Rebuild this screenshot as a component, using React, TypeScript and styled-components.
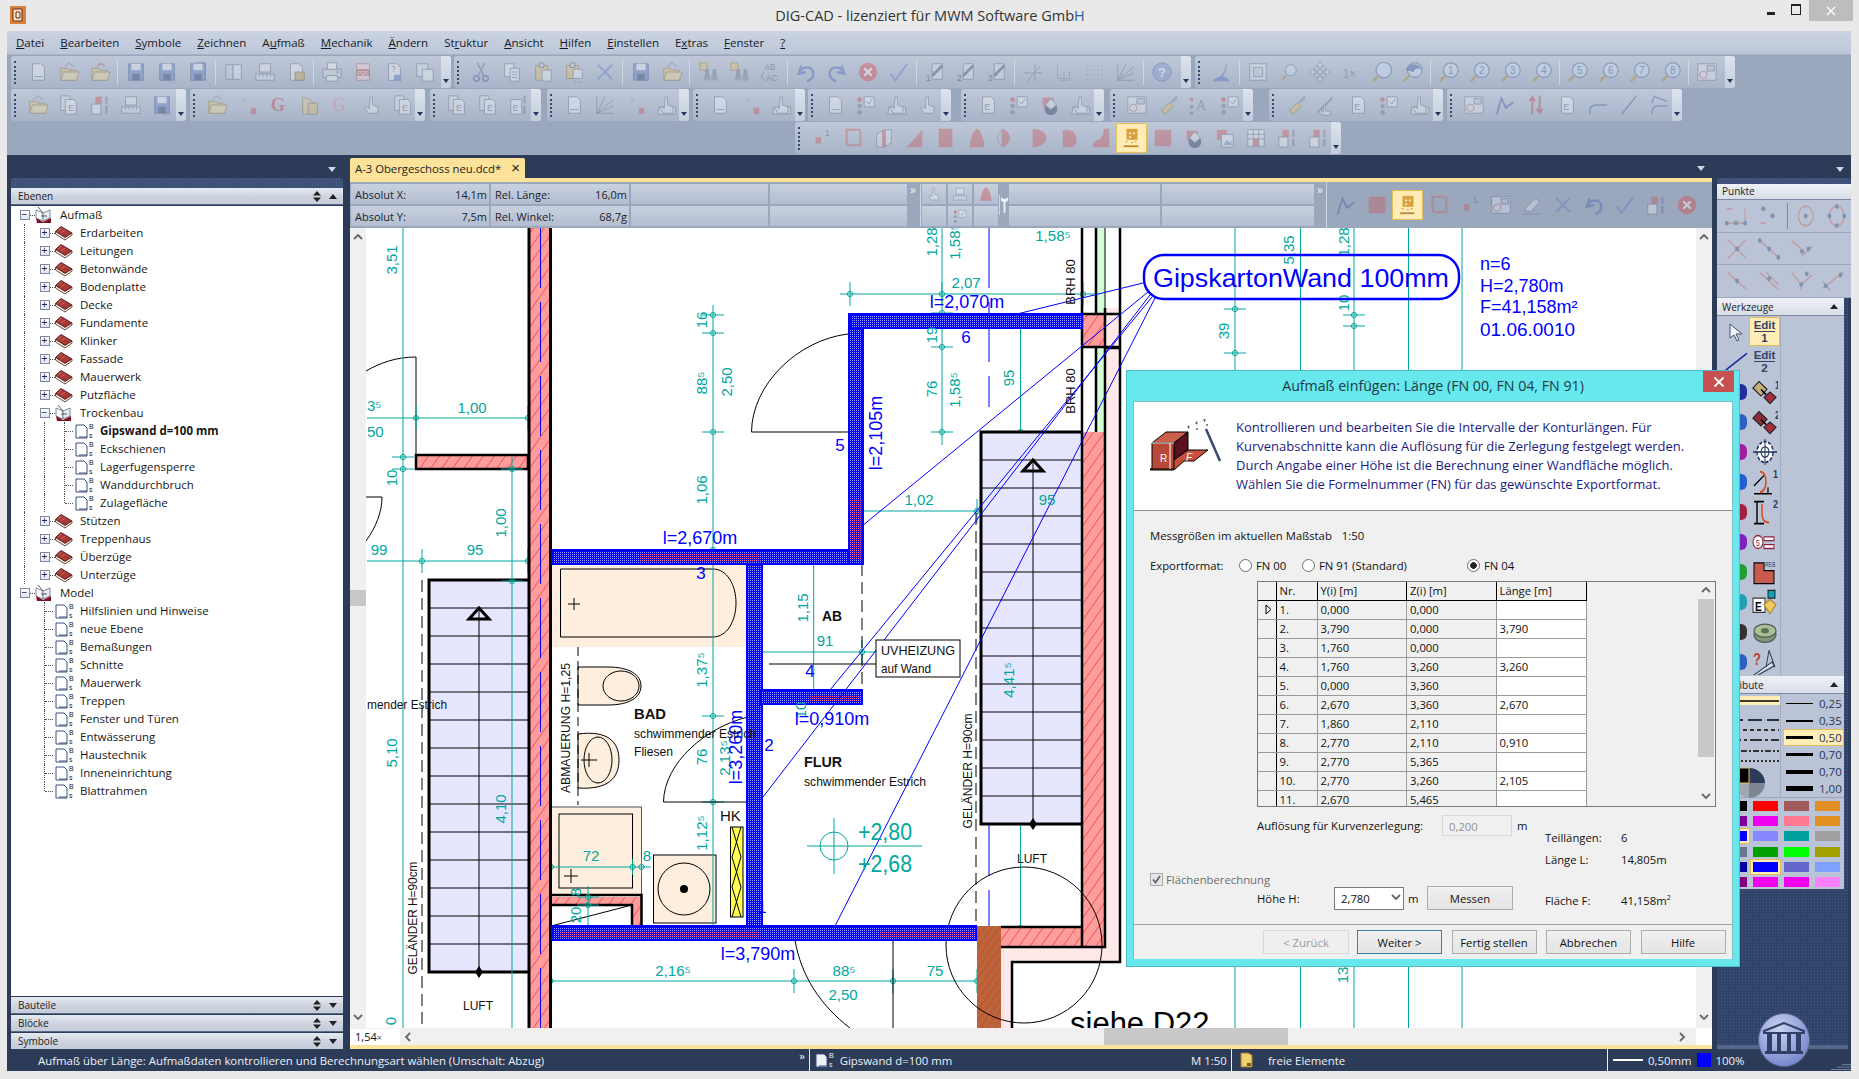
import React, { FC, ReactNode } from "react";
import styled, { createGlobalStyle } from "styled-components";

const UI_FONT = `"Open Sans", "Noto Sans", sans-serif`;
const DARK = "#2b3b58";
const TOOLBAR_BG = "#9aa7bd";
const YELLOW = "#fde29a";
const TEAL = "#00a79d";
const BLUE = "#0000ff";
const DOTS = `radial-gradient(#45598a 1px, transparent 1px) 0 0 / 3px 3px, #2f4468`;

const GlobalStyle = createGlobalStyle`
  html, body { margin: 0; padding: 0; background: #e9e9e9; }
  * { box-sizing: border-box; }
`;

/* ---------- toolbar icons ---------- */

const page = <path d="M6 3h9l4 4v14H6z" fill="#f4f6fa" stroke="#5f6c88" />;
const floppy = (
  <>
    <path d="M4 3h16v18H4z" fill="#5a79c4" stroke="#3d4f80" />
    <path d="M7 3h10v7H7z" fill="#e8ecf4" />
    <path d="M8 14h8v7H8z" fill="#27375f" />
  </>
);
const folder = (
  <>
    <path d="M3 8h7l2 2h8v11H3z" fill="#e6c468" stroke="#8a7335" />
    <path d="M6 12h17l-3 9H3z" fill="#f3dc94" stroke="#8a7335" />
  </>
);
const hand = (
  <path d="M10 3h2.5v9l6 2v7H8l-4-6 2-1 3 2z" fill="#eef1f6" stroke="#5f6c88" />
);
const redBlob = (d: string) => <path d={d} fill="#c9585c" />;
const zoomNo = (n: number) => (
  <>
    <circle cx="14" cy="10" r="8" fill="#cfe0f5" stroke="#4f6a9a" strokeWidth="1.4" />
    <text x="14" y="14" textAnchor="middle" fontSize="11" fontFamily="Liberation Sans" fill="#3a5a90">
      {n}
    </text>
    <path d="M8 16L2 22" stroke="#b08a3c" strokeWidth="3" />
  </>
);
const step = (n: number) => (
  <>
    <path d="M9 3h11v17H9z" fill="#dfe4ee" stroke="#5f6c88" />
    <path d="M9 16L20 5" stroke="#4a5570" strokeWidth="3" />
    <text x="2" y="22" fontSize="10" fontFamily="Liberation Sans" fill="#33415f">
      {n}
    </text>
  </>
);

const GLYPHS: Record<string, ReactNode> = {
  page: (
    <>
      {page}
      <path d="M8 17h9" stroke="#5f6c88" />
    </>
  ),
  pageE: (
    <>
      {page}
      <text x="8" y="17" fontSize="10" fontFamily="Liberation Sans" fill="#5f6c88">E</text>
    </>
  ),
  pagesE: (
    <>
      <path d="M3 2h10v16H3z" fill="#dfe4ee" stroke="#5f6c88" />
      <path d="M8 6h9l3 3v13H8z" fill="#f4f6fa" stroke="#5f6c88" />
      <text x="11" y="19" fontSize="10" fontFamily="Liberation Sans" fill="#5f6c88">E</text>
    </>
  ),
  pageTool: (
    <>
      <path d="M3 6h12v16H3z" fill="#f4f6fa" stroke="#5f6c88" />
      <path d="M18 2v8M18 13v9" stroke="#5f6c88" strokeWidth="2" />
      <text x="5" y="19" fontSize="10" fontFamily="Liberation Sans" fill="#5f6c88">E</text>
    </>
  ),
  open: folder,
  openUp: (
    <>
      {folder}
      <path d="M7 6l5-4 5 4" stroke="#5f6c88" fill="none" />
    </>
  ),
  openBack: (
    <>
      {folder}
      <path d="M9 6c2-4 6-4 8 0" stroke="#c05040" fill="none" strokeWidth="1.5" />
    </>
  ),
  save: floppy,
  saveDots: (
    <>
      {floppy}
      <path d="M14 23h1M17 23h1M20 23h1" stroke="#444" />
    </>
  ),
  saveStack: (
    <>
      <path d="M9 2h11v15H9z" fill="#8096cc" stroke="#3d4f80" />
      {floppy}
    </>
  ),
  book: (
    <>
      <path d="M3 4h8v16H3z" fill="#c8d4e4" stroke="#5f6c88" />
      <path d="M11 4h9v16h-9z" fill="#e7ebf2" stroke="#5f6c88" />
    </>
  ),
  ruler: (
    <>
      <path d="M6 3h12v9H6z" fill="#e7ebf2" stroke="#5f6c88" />
      <path d="M2 14h20v7H2zM6 14v3M10 14v3M14 14v3M18 14v3" fill="#dfe4ee" stroke="#5f6c88" />
    </>
  ),
  pageImg: (
    <>
      {page}
      <path d="M11 12h10v9H11z" fill="#c8a850" stroke="#6d5a2a" />
    </>
  ),
  printer: (
    <>
      <path d="M7 2h10v8H7z" fill="#fff" stroke="#5f6c88" />
      <path d="M2 9h20v9H2z" fill="#d4dae4" stroke="#5f6c88" />
      <path d="M6 16h12v6H6z" fill="#fff" stroke="#5f6c88" />
      <circle cx="18" cy="12" r="1.3" fill="#5aa05a" />
    </>
  ),
  pdf: (
    <>
      <path d="M5 3h14v18H5z" fill="#f0d8d8" stroke="#a06060" />
      <path d="M5 9h14v7H5z" fill="#b84040" />
      <text x="12" y="15" textAnchor="middle" fontSize="6" fill="#fff" fontFamily="Liberation Sans">PDF</text>
    </>
  ),
  pageQ: (
    <>
      {page}
      <text x="9" y="12" fontSize="9" fill="#b84040" fontFamily="Liberation Sans">?</text>
      <path d="M12 15h8v7h-8z" fill="#5a79c4" />
    </>
  ),
  pages: (
    <>
      <path d="M3 3h12v14H3z" fill="#dfe4ee" stroke="#5f6c88" />
      <path d="M9 9h12v13H9z" fill="#f4f6fa" stroke="#5f6c88" />
    </>
  ),
  cut: (
    <>
      <path d="M8 2l7 14M16 2L9 16" stroke="#5f6c88" strokeWidth="1.6" />
      <circle cx="7" cy="19" r="3" fill="none" stroke="#3d5aa0" strokeWidth="1.6" />
      <circle cx="17" cy="19" r="3" fill="none" stroke="#3d5aa0" strokeWidth="1.6" />
    </>
  ),
  copy: (
    <>
      <path d="M4 3h10v14H4z" fill="#f4f6fa" stroke="#5f6c88" />
      <path d="M10 8h10v14H10z" fill="#f4f6fa" stroke="#5f6c88" />
      <path d="M12 12h6M12 15h6M12 18h6" stroke="#5a79c4" />
    </>
  ),
  paste: (
    <>
      <path d="M4 5h13v16H4z" fill="#e0c270" stroke="#7b6a36" />
      <path d="M8 2h5v5H8z" fill="#c8ccd4" stroke="#555" />
      <path d="M11 10h10v12H11z" fill="#f4f6fa" stroke="#5f6c88" />
    </>
  ),
  pasteDots: (
    <>
      <path d="M4 5h13v14H4z" fill="#e0c270" stroke="#7b6a36" />
      <path d="M8 2h5v5H8z" fill="#c8ccd4" stroke="#555" />
      <path d="M11 9h10v10H11z" fill="#f4f6fa" stroke="#5f6c88" />
      <path d="M13 23h1M16 23h1M19 23h1" stroke="#444" />
    </>
  ),
  del: <path d="M4 4l16 16M20 4L4 20" stroke="#5b7ac0" strokeWidth="2" fill="none" />,
  find: (
    <>
      <path d="M3 2h8v8H3z" fill="#e6c468" stroke="#8a7335" />
      <circle cx="11" cy="18" r="3.5" fill="#7a869c" />
      <circle cx="19" cy="18" r="3.5" fill="#7a869c" />
      <path d="M9 9h4v7H9zM17 9h4v7h-4z" fill="#6a7488" />
    </>
  ),
  abc: (
    <>
      <text x="6" y="10" fontSize="9" fill="#4a5570" fontFamily="Liberation Sans">AB</text>
      <text x="8" y="22" fontSize="9" fill="#4a5570" fontFamily="Liberation Sans">AC</text>
      <path d="M6 12c-4 2-4 7 0 9" stroke="#3d5aa0" fill="none" />
    </>
  ),
  undo: <path d="M7 5l-3 9 8-2M5 13c3-8 15-8 15 1 0 4-3 7-7 8" stroke="#4a68b8" strokeWidth="2.6" fill="none" />,
  redo: <path d="M17 5l3 9-8-2M19 13c-3-8-15-8-15 1 0 4 3 7 7 8" stroke="#4a68b8" strokeWidth="2.6" fill="none" />,
  stop: (
    <>
      <circle cx="12" cy="12" r="10" fill="#d84a4a" />
      <path d="M8 8l8 8M16 8l-8 8" stroke="#fff" strokeWidth="2.4" />
    </>
  ),
  ok: <path d="M3 14l5 7L21 3" stroke="#5b7ac0" strokeWidth="2" fill="none" />,
  s1: step(1),
  s2: step(2),
  s3: step(3),
  cross: <path d="M14 2v20M2 13h20M6 22L20 5" stroke="#5f6c88" fill="none" />,
  dim: <path d="M5 5v14M5 19h14M12 12v7M18 12v7M8 21h10" stroke="#5f6c88" strokeDasharray="2 1" fill="none" />,
  grid: <path d="M3 5h18M3 10h18M3 15h18M3 20h18" stroke="#5f6c88" strokeDasharray="1 3" fill="none" />,
  fan: <path d="M3 21L21 6M3 21L21 13M3 21h18M3 21L12 3M3 3v18" stroke="#5f6c88" fill="none" />,
  help: (
    <>
      <circle cx="12" cy="12" r="10" fill="#7e96d0" stroke="#465c98" />
      <text x="12" y="17" textAnchor="middle" fontSize="14" fontWeight="700" fill="#fff" fontFamily="Liberation Sans">?</text>
    </>
  ),
  brush: <path d="M16 2c1 6-2 11-6 15-2 1-7 2-8 5h18c-1-3-4-4-7-5 3-5 5-10 4-15z" fill="#4a68b8" />,
  fit: (
    <>
      <path d="M3 3h18v18H3z" fill="#e7ebf2" stroke="#5f6c88" />
      <path d="M7 7h10v10H7z" fill="#c8d4e4" stroke="#5f6c88" />
    </>
  ),
  zoomS: (
    <>
      <circle cx="14" cy="10" r="6" fill="#cfe0f5" stroke="#4f6a9a" />
      <path d="M9 15l-4 6" stroke="#b08a3c" strokeWidth="2.4" />
    </>
  ),
  move: <path d="M12 1l4 5h-3v5h5V8l5 4-5 4v-3h-5v5h3l-4 5-4-5h3v-5H6v3l-5-4 5-4v3h5V6H8z" fill="#dfe4ee" stroke="#5f6c88" />,
  one: <text x="3" y="18" fontSize="13" fill="#5f6c88" fontFamily="Liberation Sans">1×</text>,
  zoomL: (
    <>
      <circle cx="14" cy="10" r="8.5" fill="#cfe0f5" stroke="#4f6a9a" strokeWidth="1.4" />
      <path d="M8 16l-6 6" stroke="#b08a3c" strokeWidth="3" />
    </>
  ),
  zoomBack: (
    <>
      <circle cx="14" cy="10" r="8" fill="#cfe0f5" stroke="#4f6a9a" strokeWidth="1.4" />
      <path d="M4 10c2-8 15-9 17 0-3-3-8-2-8 2z" fill="#3d5aa0" />
      <path d="M8 16l-6 6" stroke="#b08a3c" strokeWidth="3" />
    </>
  ),
  z1: zoomNo(1),
  z2: zoomNo(2),
  z3: zoomNo(3),
  z4: zoomNo(4),
  z5: zoomNo(5),
  z6: zoomNo(6),
  z7: zoomNo(7),
  z8: zoomNo(8),
  plan: (
    <>
      <path d="M2 3h20v18H2z" fill="#e7ebf2" stroke="#5f6c88" />
      <path d="M12 5h8v6h-8z" fill="#bcc8dc" stroke="#5f6c88" />
      <circle cx="8" cy="15" r="4" fill="none" stroke="#b06060" />
    </>
  ),
  wallTool: (
    <>
      <path d="M7 3h7v8H7z" fill="#c9585c" />
      <path d="M3 11h10v11H3z" fill="#eef1f6" stroke="#5f6c88" />
      <path d="M19 3v8M19 13v8" stroke="#5f6c88" strokeWidth="2" />
    </>
  ),
  redDot: (
    <>
      <path d="M6 4h4v4H6z" fill="#a8adb8" />
      <path d="M15 15h6v7h-6z" fill="#c9585c" />
    </>
  ),
  gRed: <text x="3" y="19" fontSize="20" fontFamily="Liberation Serif" fontWeight="700" fill="#c04040">G</text>,
  gPink: <text x="3" y="19" fontSize="20" fontFamily="Liberation Serif" fill="#d88080">G</text>,
  copyY: (
    <>
      <path d="M4 4c6 0 10 2 12 8v10H4z" fill="#e0c890" stroke="#7b6a36" />
      <path d="M10 10h10v12H10z" fill="#d8bc70" stroke="#7b6a36" />
    </>
  ),
  hand,
  handPage: (
    <>
      <path d="M3 14h18l1 8H2z" fill="#dfe4ee" stroke="#5f6c88" />
      {hand}
    </>
  ),
  check: (
    <>
      <circle cx="5" cy="6" r="2.5" fill="#c84040" />
      <circle cx="5" cy="13" r="2.5" fill="#6a7488" />
      <circle cx="5" cy="20" r="2.5" fill="#6a7488" />
      <path d="M10 3h11v11H10z" fill="#eef1f6" stroke="#5f6c88" />
      <path d="M12 8l3 3 4-6" stroke="#5f6c88" fill="none" />
    </>
  ),
  flood: (
    <>
      <path d="M4 4h12v10H4z" fill="#c9585c" />
      <circle cx="13" cy="16" r="7" fill="#27375f" />
      <path d="M7 12l6-7 6 7-6 5z" fill="#dfe4ee" stroke="#5f6c88" />
    </>
  ),
  letterA: (
    <>
      <circle cx="4" cy="6" r="2" fill="#c84040" />
      <circle cx="4" cy="14" r="2" fill="#6a7488" />
      <circle cx="4" cy="21" r="2" fill="#6a7488" />
      <text x="9" y="17" fontSize="15" fill="#5f6c88" fontFamily="Liberation Serif">A</text>
    </>
  ),
  brushY: (
    <>
      <path d="M5 18l9-9 4 4-9 9z" fill="#dfc060" stroke="#7b6a36" />
      <path d="M15 8l6-6 2 2-6 6z" fill="#7a869c" />
    </>
  ),
  pointer: (
    <>
      <path d="M2 20L18 4" stroke="#5f6c88" strokeWidth="2" />
      <path d="M8 12h2v6l6 2v3H7l-4-4 2-1 3 2z" fill="#eef1f6" stroke="#5f6c88" />
    </>
  ),
  curve: <path d="M3 22L8 5l5 10 8-6" stroke="#3d5aa0" strokeWidth="2" fill="none" />,
  arrows: <path d="M8 22V4M5 8l3-5 3 5M16 2v18M13 16l3 5 3-5" stroke="#b84040" strokeWidth="2" fill="none" />,
  corner: <path d="M3 22c0-8 2-10 8-10h11" stroke="#3d5aa0" strokeWidth="1.6" fill="none" />,
  slash: <path d="M4 22L20 2" stroke="#3d5aa0" strokeWidth="1.6" />,
  trim: <path d="M6 2l-3 8M6 3l14 5M3 22c0-7 3-9 7-9h11" stroke="#3d5aa0" fill="none" strokeWidth="1.4" />,
  rect: <path d="M5 3h13c2 0 2 2 2 2v15H9c-3 0-4-1-4-3z" fill="none" stroke="#c96060" strokeWidth="2.2" />,
  mark1: (
    <>
      <path d="M5 11h6v7H5z" fill="#c9585c" />
      <text x="15" y="10" fontSize="10" fill="#4a5570" fontFamily="Liberation Sans">1</text>
    </>
  ),
  box3d: (
    <>
      <path d="M4 8l8-5h8v14l-8 5H4z" fill="#dfe4ee" stroke="#5f6c88" />
      <path d="M12 3v19" stroke="#c9585c" strokeWidth="4" />
    </>
  ),
  tri: redBlob("M20 3v19H3z"),
  b1: redBlob("M4 2h15v20H4z"),
  b2: redBlob("M12 2c5 2 8 14 8 20H4C4 16 7 4 12 2z"),
  b3: (
    <>
      <path d="M5 22c12-3 12-17 0-20" fill="#c9585c" />
      <path d="M8 2C-2 8-2 18 8 22" stroke="#6a7488" fill="none" />
    </>
  ),
  b4: redBlob("M5 2c8 0 15 4 15 10s-7 10-15 10z"),
  b5: redBlob("M4 4c8-3 15 2 15 10 0 5-2 8-6 8H4z"),
  b6: redBlob("M15 2h6v20H3c0-4 4-8 6-8 4 0 6-8 6-12z"),
  square: redBlob("M3 3h18v18H3z"),
  note: (
    <>
      <path d="M6 2h12v12H6z" fill="#d8a040" />
      <path d="M9 6h2v2H9zM13 6h2v2h-2zM9 10h2v2H9z" fill="#fff3c8" />
      <path d="M3 21h16" stroke="#c08830" strokeWidth="2" />
      <path d="M5 16h2M11 17h2M15 16h2" stroke="#c08830" />
    </>
  ),
  photo: (
    <>
      <path d="M3 3h11v11H3z" fill="#c9585c" />
      <path d="M8 8h13v14H8z" fill="#eef1f6" stroke="#5f6c88" />
      <path d="M10 20l4-6 3 3 2-2v5z" fill="#7e96d0" />
    </>
  ),
  table: (
    <>
      <path d="M3 3h18v18H3z" fill="#eef1f6" stroke="#5f6c88" />
      <path d="M3 8h18M3 13h18M9 3v18M15 3v18" stroke="#5f6c88" />
      <path d="M9 13h6v8H9z" fill="#c9585c" />
    </>
  ),
  eraser: (
    <>
      <path d="M4 16L15 5l6 3-10 11H6z" fill="#dfe4ee" stroke="#5f6c88" />
      <path d="M2 22h20" stroke="#5f6c88" />
    </>
  ),
};

const ToolIcon: FC<{ kind: string; size?: number }> = ({ kind, size = 22 }) => (
  <svg width={size} height={size} viewBox="0 0 24 24">
    {GLYPHS[kind]}
  </svg>
);

/* ---------- data ---------- */

interface BarDef {
  w: number;
  ml?: number;
  items: string[];
}

const TOOLBAR_ROWS: BarDef[][] = [
  [
    { w: 440, items: ["page", "openUp", "openBack", "|", "save", "saveDots", "saveStack", "|", "book", "ruler", "pageImg", "|", "printer", "pdf", "pageQ", "pages"] },
    { w: 737, ml: 3, items: ["cut", "copy", "paste", "pasteDots", "del", "|", "save", "openUp", "|", "find", "find", "abc", "|", "undo", "redo", "stop", "ok", "|", "s1", "s2", "s3", "|", "cross", "dim", "grid", "fan", "|", "help"] },
    { w: 540, ml: 4, items: ["brush", "|", "fit", "zoomS", "move", "one", "zoomL", "zoomBack", "|", "z1", "z2", "z3", "z4", "|", "z5", "z6", "z7", "z8", "|", "plan"] },
  ],
  [
    { w: 175, items: ["openUp", "pagesE", "wallTool", "ruler", "saveDots"] },
    { w: 235, ml: 4, items: ["openUp", "redDot", "gRed", "copyY", "gPink", "hand", "pagesE"] },
    { w: 111, ml: 5, items: ["pagesE", "pagesE", "pageTool"] },
    { w: 142, ml: 6, items: ["page", "fan", "redDot", "handPage"] },
    { w: 112, ml: 4, items: ["page", "redDot", "handPage"] },
    { w: 143, ml: 3, items: ["page", "check", "handPage", "hand"] },
    { w: 143, ml: 10, items: ["pageE", "check", "flood", "handPage"] },
    { w: 143, ml: 6, items: ["plan", "brushY", "letterA", "check"] },
    { w: 174, ml: 16, items: ["brushY", "pointer", "pageE", "check", "handPage"] },
    { w: 235, ml: 4, items: ["plan", "curve", "arrows", "pageE", "corner", "slash", "trim"] },
  ],
  [
    { w: 546, ml: 784, items: ["mark1", "rect", "box3d", "tri", "b1", "b2", "b3", "b4", "b5", "b6", "*note", "square", "flood", "photo", "table", "wallTool", "wallTool"] },
  ],
];

const MENU: [string, string, string][] = [
  ["", "D", "atei"],
  ["", "B", "earbeiten"],
  ["", "S", "ymbole"],
  ["", "Z", "eichnen"],
  ["A", "u", "fmaß"],
  ["", "M", "echanik"],
  ["", "Ä", "ndern"],
  ["St", "r", "uktur"],
  ["", "A", "nsicht"],
  ["", "H", "ilfen"],
  ["", "E", "instellen"],
  ["E", "x", "tras"],
  ["", "F", "enster"],
  ["", "?", ""],
];

type TreeKind = "openBook" | "book" | "page";
interface TreeItem {
  label: string;
  kind: TreeKind;
  guides: boolean[];
  box?: "+" | "-";
  elbow?: "mid" | "last";
  bold?: boolean;
}

const L1 = (label: string): TreeItem => ({ label, kind: "book", guides: [true], box: "+" });
const L2 = (label: string, last = false, bold = false): TreeItem => ({
  label,
  kind: "page",
  guides: [true, true],
  elbow: last ? "last" : "mid",
  bold,
});
const M1 = (label: string, last = false): TreeItem => ({
  label,
  kind: "page",
  guides: [false],
  elbow: last ? "last" : "mid",
});

const TREE: TreeItem[] = [
  { label: "Aufmaß", kind: "openBook", guides: [], box: "-" },
  ...["Erdarbeiten", "Leitungen", "Betonwände", "Bodenplatte", "Decke", "Fundamente", "Klinker", "Fassade", "Mauerwerk", "Putzfläche"].map(L1),
  { label: "Trockenbau", kind: "openBook", guides: [true], box: "-" },
  L2("Gipswand d=100 mm", false, true),
  L2("Eckschienen"),
  L2("Lagerfugensperre"),
  L2("Wanddurchbruch"),
  L2("Zulagefläche", true),
  ...["Stützen", "Treppenhaus", "Überzüge", "Unterzüge"].map(L1),
  { label: "Model", kind: "openBook", guides: [], box: "-" },
  ...["Hilfslinien und Hinweise", "neue Ebene", "Bemaßungen", "Schnitte", "Mauerwerk", "Treppen", "Fenster und Türen", "Entwässerung", "Haustechnik", "Inneneinrichtung"].map((l) => M1(l)),
  M1("Blattrahmen", true),
];

const TABLE_ROWS: [string, string, string, string][] = [
  ["1.", "0,000", "0,000", ""],
  ["2.", "3,790", "0,000", "3,790"],
  ["3.", "1,760", "0,000", ""],
  ["4.", "1,760", "3,260", "3,260"],
  ["5.", "0,000", "3,360", ""],
  ["6.", "2,670", "3,360", "2,670"],
  ["7.", "1,860", "2,110", ""],
  ["8.", "2,770", "2,110", "0,910"],
  ["9.", "2,770", "5,365", ""],
  ["10.", "2,770", "3,260", "2,105"],
  ["11.", "2,670", "5,465", ""],
];

const SWATCHES = [
  "#000000", "#ff0000", "#a05a5a", "#e08f24",
  "#80009f", "#ee00ee", "#ff7a90", "#e09020",
  "#0000ff", "#8787ff", "#00a0a0", "#a0a0a0",
  "#66778f", "#00a000", "#00ff00", "#a0a000",
  "#0000a0", "#0000ff", "#6666cc", "#80a0ff",
  "#800080", "#ee00ee", "#ee00ee", "#ff80ff",
];

const LINE_WIDTHS: [string, number][] = [
  ["0,25", 1],
  ["0,35", 2],
  ["0,50", 3],
  ["0,70", 3],
  ["0,70", 4],
  ["1,00", 5],
];

/* ---------- drawing ---------- */

const T: FC<{
  x: number;
  y: number;
  s: string;
  c?: string;
  size?: number;
  rot?: boolean;
  anchor?: "start" | "middle";
  len?: number;
  bold?: boolean;
}> = ({ x, y, s, c = TEAL, size = 15, rot, anchor = "middle", len, bold }) => (
  <text
    x={x}
    y={y}
    fill={c}
    fontSize={size}
    fontWeight={bold ? 700 : 400}
    fontFamily="Liberation Sans, sans-serif"
    textAnchor={anchor}
    dominantBaseline="central"
    textLength={len}
    lengthAdjust={len ? "spacingAndGlyphs" : undefined}
    transform={rot ? `rotate(-90 ${x} ${y})` : undefined}
  >
    {s}
  </text>
);

const HTick: FC<{ x: number; y: number; r?: number }> = ({ x, y, r = 11 }) => (
  <g stroke={TEAL} fill="none">
    <path d={`M${x - r} ${y}h${2 * r}`} />
    <circle cx={x} cy={y} r={2.6} />
  </g>
);
const VTick: FC<{ x: number; y: number; r?: number }> = ({ x, y, r = 12 }) => (
  <g stroke={TEAL} fill="none">
    <path d={`M${x} ${y - r}v${2 * r}`} />
    <circle cx={x} cy={y} r={2.6} />
  </g>
);

const Stairs: FC<{ x1: number; x2: number; y1: number; y2: number; axis: number; first: number }> = ({
  x1,
  x2,
  y1,
  y2,
  axis,
  first,
}) => {
  const steps: number[] = [];
  for (let y = first; y < y2 - 4; y += 28) steps.push(y);
  return (
    <g>
      <rect x={x1} y={y1} width={x2 - x1} height={y2 - y1} fill="#e6e6ff" />
      {steps.map((y) => (
        <path key={y} d={`M${x1} ${y}H${x2}`} stroke="#000" />
      ))}
      <path d={`M${x2} ${y1}H${x1}V${y2}H${x2}`} stroke="#000" strokeWidth="3" fill="none" />
      <path d={`M${axis} ${y1 + 28}V${y2}`} stroke="#000" />
      <path d={`M${axis - 10} ${y1 + 39}h20l-10-11z`} fill="none" stroke="#000" strokeWidth="3" />
      <path d={`M${axis} ${y2 - 6}l4 6-4 6-4-6z`} fill="#000" />
    </g>
  );
};

const Wall: FC<{ x: number; y: number; w: number; h: number; red?: boolean }> = ({ x, y, w, h, red }) => (
  <rect x={x} y={y} width={w} height={h} fill={red ? "url(#ditherRed)" : "url(#dither)"} stroke={red ? "none" : BLUE} strokeWidth="2" />
);

const CadDrawing: FC = () => (
  <CanvasSvg viewBox="366 228 1330 800">
    <defs>
      <pattern id="hatch" width="9" height="9" patternUnits="userSpaceOnUse" patternTransform="rotate(35)">
        <rect width="9" height="9" fill="#ff9c9c" />
        <path d="M0 0V9" stroke="#e02020" strokeWidth="1" />
      </pattern>
      <pattern id="brown" width="6" height="6" patternUnits="userSpaceOnUse" patternTransform="rotate(35)">
        <rect width="6" height="6" fill="#b9663c" />
        <path d="M0 0V6" stroke="#e03020" strokeWidth="1" />
      </pattern>
      <pattern id="dither" width="2" height="2" patternUnits="userSpaceOnUse">
        <rect width="2" height="2" fill="#0000ff" />
        <rect width="1" height="1" fill="#9a9aff" />
      </pattern>
      <pattern id="ditherRed" width="2" height="2" patternUnits="userSpaceOnUse">
        <rect width="2" height="2" fill="#1010f0" />
        <rect width="1" height="1" fill="#ff6a8a" />
      </pattern>
    </defs>
    <rect x="366" y="228" width="1330" height="800" fill="#fff" />

    {/* fixtures */}
    <rect x="551" y="564" width="197" height="83" fill="#fdeedd" />
    <path d="M560.5 569H713c14 0 23 16 23 34s-9 34-23 34H560.5z" fill="none" stroke="#000" />
    <path d="M568 604h12M574 598v12" stroke="#000" />
    <path d="M578 667h30c22 0 33 8 33 19s-11 19-33 19h-30z" fill="#fdeedd" stroke="#000" />
    <ellipse cx="621" cy="686" rx="18" ry="15" fill="none" stroke="#000" />
    <path d="M578 734c30-4 41 8 41 26s-11 30-41 28z" fill="#fdeedd" stroke="#000" />
    <ellipse cx="598" cy="760" rx="14" ry="23" fill="none" stroke="#000" />
    <path d="M581 760h16M589 753v14" stroke="#000" />
    <path d="M578 647V805" stroke="#000" strokeDasharray="9 5" />
    <rect x="551" y="807" width="90.5" height="88" fill="#fdeedd" stroke="#555" />
    <rect x="559" y="814" width="73.5" height="74" fill="none" stroke="#000" />
    <path d="M564 876h14M571 869v14" stroke="#000" />
    <rect x="653.5" y="855" width="62.5" height="68" fill="#fdeedd" stroke="#000" />
    <ellipse cx="684" cy="889" rx="26" ry="26" fill="none" stroke="#000" />
    <circle cx="684" cy="889" r="4" fill="#000" />
    <rect x="730.5" y="827" width="12.5" height="90" fill="#ffff55" stroke="#000" />
    <path d="M732 827l9 30-9 30 9 30M741 827l-9 30 9 30-9 30" stroke="#000" fill="none" />
    <rect x="551" y="897" width="90" height="8" fill="url(#hatch)" />
    <rect x="632" y="905" width="9" height="21" fill="url(#hatch)" />
    <path d="M551 895h90.5V926M551 905h81V926" stroke="#000" strokeWidth="2.5" fill="none" />
    <path d="M551 926l81-21" stroke="#000" />

    {/* left room */}
    <path d="M416 455V357c-20 0-36 6-50 14" fill="none" stroke="#000" />
    <path d="M366 497h16c0 15-6 30-16 44" fill="none" stroke="#000" />
    <rect x="416" y="455" width="112" height="14" fill="url(#hatch)" stroke="#000" strokeWidth="2.5" />
    <Stairs x1={429} x2={528} y1={580} y2={972} axis={479} first={608} />
    <path d="M422 580V1028" stroke="#000" strokeDasharray="12 6" />

    {/* dimension lines */}
    <g stroke={TEAL} fill="none">
      <path d="M403 228V1028M512 457V1028M713 305V926M942 228V445M1020.5 328V937M813.7 564V690" />
      <path d="M367 418H540M367 561H540M840 294H1096M862 511H1094M760 652H875M541 867H651M541 981H989" />
      <path d="M1235 228V1028M1300.5 228V1028M1354 228V1028M1408.5 228V1028M1462 228V1028" />
      <path d="M588 886V926" />
    </g>
    {[[416, 418], [528, 418], [422, 561], [528, 561], [850, 294], [942, 294], [1083, 294], [977, 511], [1082, 511], [862, 652], [551, 867, 8], [632.6, 867, 8], [641.5, 867, 8], [550.5, 981], [794, 981], [893, 981], [977, 981]].map(([x, y, r], i) => (
      <VTick key={i} x={x} y={y} r={r ?? 12} />
    ))}
    {[[403, 457], [403, 469], [512, 469], [512, 581], [713, 315], [713, 333], [713, 432], [713, 550], [713, 716], [713, 802], [942, 313], [942, 347], [942, 432], [1020.5, 432], [1020.5, 928], [588, 897], [588, 905], [1235, 309], [1235, 353], [1354, 315], [1354, 326]].map(([x, y], i) => (
      <HTick key={i} x={x} y={y} />
    ))}
    <path d="M989 228V407M989 520V926M1033 432V828" stroke={BLUE} strokeDasharray="60 14" fill="none" />

    {/* main walls */}
    <rect x="528" y="228" width="23.5" height="800" fill="url(#hatch)" />
    <path d="M529 228V1028M550.5 228V1028" stroke="#000" strokeWidth="3" />
    <path d="M540.5 228V1028" stroke={BLUE} strokeDasharray="60 14" />

    <Stairs x1={981} x2={1082} y1={432} y2={824} axis={1033} first={460} />
    <path d="M976 513V926" stroke="#000" strokeDasharray="12 6" />
    <path d="M862 564V690" stroke="#000" strokeDasharray="12 6" />

    <rect x="1096" y="228" width="9" height="87" fill="#d4ffd4" />
    <rect x="1096" y="348" width="9" height="84" fill="#d4ffd4" />
    <rect x="1105" y="308" width="15" height="654" fill="#ffe8e8" />
    <rect x="1082" y="314" width="23" height="33" fill="url(#hatch)" />
    <rect x="1082" y="432" width="23" height="515" fill="url(#hatch)" />
    <rect x="1001" y="927" width="81" height="20" fill="url(#hatch)" />
    <rect x="1012" y="947" width="108" height="15" fill="#ffe8e8" />
    <rect x="1001" y="947" width="11" height="81" fill="#ffe8e8" />
    <rect x="977" y="926" width="24" height="102" fill="url(#brown)" />
    <path d="M1082 228V947M1105 308V947H1001M1120 228V962H1012V1028M1001 927H1082M1096 228V315M1096 348V432M1105 348H1120M1082 314h38M1082 347h38" stroke="#000" strokeWidth="2.5" fill="none" />
    <path d="M1105 228V308" stroke="#000" strokeWidth="1" />

    {/* doors */}
    <path d="M848 334c-50 6-96 50-96.500 98H848" fill="none" stroke="#000" />
    <path d="M748 717c-42 10-84 46-84.500 85H748" fill="none" stroke="#000" />
    <circle cx="1024" cy="945" r="78" fill="none" stroke="#000" />
    <path d="M795 940c6 36 26 66 55 88M893 940V1028" fill="none" stroke="#000" />
    <path d="M769 664H876" stroke="#000" />

    {/* highlighted contour */}
    <Wall x={552} y={550} w={310} h={14} />
    <Wall x={849} y={314} w={14} h={250} />
    <Wall x={850} y={314} w={232} h={14} />
    <Wall x={747} y={564} w={15} h={362} />
    <Wall x={760} y={690} w={102} h={14} />
    <Wall x={552} y={926} w={424} h={14} />
    <Wall x={850} y={500} w={12} h={60} red />
    <Wall x={640} y={554} w={120} h={8} red />
    <Wall x={560} y={931} w={200} h={7} red />
    <Wall x={880} y={931} w={94} h={7} red />
    <Wall x={810} y={695} w={50} h={6} red />

    {/* leader lines */}
    <path d="M1143 283L1017 314M1148 292L862 526M1150 295L763 797M1152 297L830 690M1155 298L835 926" stroke={BLUE} fill="none" />

    {/* dimension texts */}
    <T x={391} y={260} s="3,51" rot />
    <T x={391} y={478} s="10" rot />
    <T x={500} y={523} s="1,00" rot />
    <T x={391} y={753} s="5,10" rot />
    <T x={500} y={809} s="4,10" rot />
    <T x={390} y={1021} s="0" rot />
    <T x={367} y={405} s="3⁵" anchor="start" />
    <T x={367} y={431} s="50" anchor="start" />
    <T x={472} y={407} s="1,00" />
    <T x={379} y={549} s="99" />
    <T x={475} y={549} s="95" />
    <T x={701} y={320} s="16" rot />
    <T x={701} y={383} s="88⁵" rot />
    <T x={726} y={382} s="2,50" rot />
    <T x={701} y={490} s="1,06" rot />
    <T x={931} y={242} s="1,28" rot />
    <T x={954} y={242} s="1,58⁵" rot />
    <T x={931} y={335} s="19" rot />
    <T x={931} y={389} s="76" rot />
    <T x={954} y={390} s="1,58⁵" rot />
    <T x={1008} y={378} s="95" rot />
    <T x={966} y={282} s="2,07" />
    <T x={1053} y={235} s="1,58⁵" />
    <T x={919} y={499} s="1,02" />
    <T x={1047} y={499} s="95" />
    <T x={802} y={608} s="1,15" rot />
    <T x={825} y={640} s="91" />
    <T x={800} y={710} s="10" rot />
    <T x={701} y={670} s="1,37⁵" rot />
    <T x={701} y={757} s="76" rot />
    <T x={724} y={758} s="2,13⁵" rot />
    <T x={701} y={833} s="1,12⁵" rot />
    <T x={591} y={855} s="72" />
    <T x={647} y={855} s="8" />
    <T x={575} y={892} s="8" rot />
    <T x={575} y={915} s="20" rot />
    <T x={1008} y={680} s="4,41⁵" rot />
    <T x={673} y={970} s="2,16⁵" />
    <T x={844} y={970} s="88⁵" />
    <T x={935} y={970} s="75" />
    <T x={843} y={994} s="2,50" />
    <T x={1223} y={331} s="39" rot />
    <T x={1288} y={250} s="5,35" rot />
    <T x={1343} y={242} s="1,28" rot />
    <T x={1343} y={303} s="10" rot />
    <T x={1342} y={975} s="13" rot />
    <T x={858} y={831} s="+2,80" anchor="start" size={24} len={54} />
    <T x={858} y={863} s="+2,68" anchor="start" size={24} len={54} />
    <path d="M807 846H922M834 818V874" stroke={TEAL} fill="none" />
    <circle cx="834" cy="846" r="14" stroke={TEAL} fill="none" />

    {/* contour labels */}
    <T x={967} y={302} s="l=2,070m" c={BLUE} size={18} />
    <T x={966} y={337} s="6" c={BLUE} size={17} />
    <T x={876} y={433} s="l=2,105m" c={BLUE} size={18} rot />
    <T x={840} y={445} s="5" c={BLUE} size={17} />
    <T x={700} y={538} s="l=2,670m" c={BLUE} size={18} />
    <T x={701} y={573} s="3" c={BLUE} size={17} />
    <T x={810} y={671} s="4" c={BLUE} size={17} />
    <T x={832} y={719} s="l=0,910m" c={BLUE} size={18} />
    <T x={769} y={745} s="2" c={BLUE} size={17} />
    <T x={736} y={747} s="l=3,260m" c={BLUE} size={18} rot />
    <T x={762} y={907} s="1" c={BLUE} size={17} />
    <T x={758} y={954} s="l=3,790m" c={BLUE} size={18} />

    {/* room labels */}
    <T x={367} y={704} s="mender Estrich" c="#111" size={13} anchor="start" len={80} />
    <T x={478} y={1005} s="LUFT" c="#111" size={13} len={30} />
    <T x={1032} y={858} s="LUFT" c="#111" size={13} len={30} />
    <T x={412} y={918} s="GELÄNDER H=90cm" c="#111" size={13} rot len={113} />
    <T x={967} y={771} s="GELÄNDER H=90cm" c="#111" size={13} rot len={115} />
    <T x={565} y={728} s="ABMAUERUNG H=1,25" c="#111" size={13} rot len={130} />
    <T x={1070} y={282} s="BRH 80" c="#111" size={13} rot />
    <T x={1070} y={391} s="BRH 80" c="#111" size={13} rot />
    <T x={634} y={713} s="BAD" c="#111" size={15} bold anchor="start" len={32} />
    <T x={634} y={733} s="schwimmender Estrich" c="#111" size={13} anchor="start" len={122} />
    <T x={634} y={751} s="Fliesen" c="#111" size={13} anchor="start" len={39} />
    <T x={804} y={761} s="FLUR" c="#111" size={15} bold anchor="start" len={38} />
    <T x={804} y={781} s="schwimmender Estrich" c="#111" size={13} anchor="start" len={122} />
    <T x={822} y={615} s="AB" c="#111" size={15} bold anchor="start" len={20} />
    <T x={720} y={815} s="HK" c="#111" size={15} anchor="start" />
    <rect x="876" y="640" width="84" height="37" fill="#fff" stroke="#000" />
    <T x={881} y={650} s="UVHEIZUNG" c="#111" size={13} anchor="start" len={74} />
    <T x={881} y={668} s="auf Wand" c="#111" size={13} anchor="start" len={50} />
    <text x="1070" y="1034" fontSize="31" fontFamily="Liberation Sans, sans-serif" fill="#000">
      siehe D22
    </text>

    {/* callout */}
    <rect x="1144" y="255" width="315" height="44" rx="20" fill="#fff" fillOpacity="0" stroke={BLUE} strokeWidth="2.4" />
    <T x={1153} y={278} s="GipskartonWand 100mm" c={BLUE} size={26} anchor="start" len={296} />
    <T x={1480} y={264} s="n=6" c={BLUE} size={18} anchor="start" />
    <T x={1480} y={286} s="H=2,780m" c={BLUE} size={18} anchor="start" />
    <T x={1480} y={307} s="F=41,158m²" c={BLUE} size={18} anchor="start" />
    <T x={1480} y={330} s="01.06.0010" c={BLUE} size={18} anchor="start" len={95} />
  </CanvasSvg>
);

/* ---------- small drawings ---------- */

const BookIcon: FC = () => (
  <svg width="18" height="15" viewBox="0 0 18 15">
    <path d="M0.500 5.500L6 0.500l11 6.500-7 4.500z" fill="#a83a36" stroke="#4d1512" strokeWidth=".9" />
    <path d="M3 5l4-3M6 7l4-3" stroke="#d8706a" strokeWidth=".8" />
    <path d="M0.500 5.500l9.500 6 7-4.500v2l-7 5-9.500-6z" fill="#fbf3ec" stroke="#4d1512" strokeWidth=".8" />
  </svg>
);

const OpenBookIcon: FC = () => (
  <svg width="17" height="17" viewBox="0 0 17 17">
    <path d="M1 3l7 3v8l-7-3z" fill="#fff" stroke="#5f6c88" strokeWidth=".8" />
    <path d="M15 3L8 6v8l7-3z" fill="#e8edf5" stroke="#5f6c88" strokeWidth=".8" />
    <path d="M3 0l5 6M6 9h6" stroke="#333" strokeWidth=".8" />
    <path d="M1 11l1 5h14l0-5-8 4z" fill="#7b1020" />
  </svg>
);

const PageIcon: FC = () => (
  <PageIconBox>
    <svg width="13" height="15" viewBox="0 0 13 15">
      <path d="M1 1h8l3 3v10H1z" fill="#fff" stroke="#3a4f7c" />
      <path d="M4 13h8" stroke="#3a4f7c" />
    </svg>
    <PageLetters>
      <span>B</span>
      <span>s</span>
    </PageLetters>
  </PageIconBox>
);

const TREE_ICONS: Record<TreeKind, FC> = { openBook: OpenBookIcon, book: BookIcon, page: PageIcon };

const Updown: FC = () => (
  <svg width="8" height="11" viewBox="0 0 8 11">
    <path d="M4 0l4 4.500H0zM4 11l4-4.500H0z" fill="#222" />
  </svg>
);

const Tri: FC<{ up?: boolean; color?: string }> = ({ up, color = "#222" }) => (
  <svg width="8" height="5" viewBox="0 0 8 5">
    <path d={up ? "M4 0l4 5H0z" : "M4 5l4-5H0z"} fill={color} />
  </svg>
);

const Chev: FC<{ dir: "up" | "down" | "left" | "right" }> = ({ dir }) => {
  const d = { up: "M1 6l4-4 4 4", down: "M1 2l4 4 4-4", left: "M6 1L2 5l4 4", right: "M2 1l4 4-4 4" }[dir];
  return (
    <svg width="10" height="10" viewBox="0 0 10 10">
      <path d={d} fill="none" stroke="#666" strokeWidth="1.800" />
    </svg>
  );
};

const Tree: FC = () => (
  <TreeBox>
    {TREE.map((item, i) => {
      const Icon = TREE_ICONS[item.kind];
      return (
        <TreeRow key={i}>
          {item.guides.map((on, g) => (
            <Guide key={g} $on={on} />
          ))}
          {item.box && (
            <Expander>
              <ExpBox>{item.box === "+" ? "+" : "−"}</ExpBox>
            </Expander>
          )}
          {item.elbow && <Elbow $last={item.elbow === "last"} />}
          <TreeIconSlot>
            <Icon />
          </TreeIconSlot>
          <TreeLabel $bold={item.bold}>{item.label}</TreeLabel>
        </TreeRow>
      );
    })}
  </TreeBox>
);

const Dropper: FC<{ label: string }> = ({ label }) => (
  <DockHeader>
    <span>{label}</span>
    <HeaderMarks>
      <Updown />
      <Tri />
    </HeaderMarks>
  </DockHeader>
);

const Toolbar: FC<{ bar: BarDef }> = ({ bar }) => (
  <Bar $w={bar.w} $ml={bar.ml ?? 0}>
    <Grip />
    <BarItems>
      {bar.items.map((it, i) =>
        it === "|" ? (
          <BarSep key={i} />
        ) : it.startsWith("*") ? (
          <Highlit key={i}>
            <ToolIcon kind={it.slice(1)} />
          </Highlit>
        ) : (
          <BarButton key={i}>
            <ToolIcon kind={it} />
          </BarButton>
        ),
      )}
    </BarItems>
    <BarCap>
      <CapArrow />
    </BarCap>
  </Bar>
);

/* right dock icons */
const PointRowIcon: FC<{ d: string; dots?: string }> = ({ d, dots }) => (
  <svg width="28" height="24" viewBox="0 0 30 20" preserveAspectRatio="none">
    <path d={d} fill="none" stroke="#c0a0a8" strokeWidth="1.500" />
    {dots && <path d={dots} stroke="#7f93b4" strokeWidth="4" strokeLinecap="round" fill="none" />}
  </svg>
);

const TOOL_DRAWINGS: ReactNode[] = [
  <>
    <path d="M1 7l6-5 8 6-6 5z" fill="#c4b27a" stroke="#222" />
    <path d="M9 8l5 4" stroke="#000" strokeWidth="1.500" />
    <path d="M12 14l6-4 6 4-6 5z" fill="#a82c3c" stroke="#222" />
    <text x="23" y="8" fontSize="9" fontWeight="700" fill="#2a3a66" fontFamily="Liberation Sans">1</text>
  </>,
  <>
    <path d="M1 7l6-5 8 6-6 5z" fill="#8c2c3c" stroke="#222" />
    <path d="M9 8l5 4" stroke="#000" strokeWidth="1.500" />
    <path d="M12 14l6-4 6 4-6 5z" fill="#a82c3c" stroke="#222" />
    <text x="23" y="8" fontSize="9" fontWeight="700" fill="#2a3a66" fontFamily="Liberation Sans">2</text>
  </>,
  <>
    <circle cx="13" cy="10" r="8" fill="#fff" stroke="#20305c" strokeDasharray="3 1.500" strokeWidth="1.400" />
    <circle cx="13" cy="10" r="4" fill="none" stroke="#20305c" />
    <path d="M1 10h24M13 0v20" stroke="#20305c" />
  </>,
  <>
    <path d="M2 19h18M16 14v5M2 13L12 5" stroke="#000" strokeWidth="1.200" />
    <path d="M8 2c8 0 8 15 0 16" fill="none" stroke="#d84a20" strokeWidth="1.500" />
    <text x="21" y="7" fontSize="9" fontWeight="700" fill="#2a3a66" fontFamily="Liberation Sans">1</text>
  </>,
  <>
    <path d="M2 2h10M2 19h10M5 2v17" stroke="#000" strokeWidth="1.400" />
    <path d="M10 4v6c0 6 2 8 7 8" fill="none" stroke="#d84a20" strokeWidth="1.500" />
    <text x="21" y="7" fontSize="9" fontWeight="700" fill="#2a3a66" fontFamily="Liberation Sans">2</text>
  </>,
  <>
    <circle cx="6" cy="10" r="5" fill="#fff" stroke="#902040" />
    <text x="6" y="13" textAnchor="middle" fontSize="7" fill="#902040" fontFamily="Liberation Sans">5</text>
    <path d="M12 6h10v3H12zM12 12h10v3H12z" fill="#fff" stroke="#902040" />
  </>,
  <>
    <path d="M2 3h10v6h10v10H2z" fill="#c85a50" stroke="#000" />
    <text x="13" y="6" fontSize="5" fill="#2a3a66" fontFamily="Liberation Sans">REB</text>
  </>,
  <>
    <path d="M1 7h12v11H1z" fill="#fff" stroke="#333" />
    <text x="3" y="17" fontSize="10" fontWeight="700" fontFamily="Liberation Sans">E</text>
    <path d="M16 1h7v6h-7z" fill="#10a0c0" stroke="#222" />
    <path d="M12 12l6-4 6 4-6 7z" fill="#f0c860" stroke="#b08830" />
  </>,
  <>
    <ellipse cx="13" cy="12" rx="11" ry="6" fill="#7d9a74" stroke="#555" />
    <ellipse cx="13" cy="9" rx="11" ry="5" fill="#a8c096" stroke="#555" />
    <ellipse cx="13" cy="9" rx="4" ry="2" fill="#5a7050" />
  </>,
  <>
    <text x="1" y="12" fontSize="13" fontWeight="700" fill="#c04030" fontFamily="Liberation Sans">?</text>
    <path d="M17 1l-3 13M17 1l6 13M2 20L20 10l2 3-18 8z" fill="#dfe4ee" stroke="#33415f" />
  </>,
];

const COL1_COLORS = ["#2030a0", "#3060c0", "#a020a0", "#2060d0", "#a02040", "#8020c0", "#20a030", "#20a0b0", "#333", "#3060c0"];

const ToolsColumn: FC = () => (
  <ToolsGrid>
    <ToolCol>
      <ToolCell>
        <svg width="18" height="22" viewBox="0 0 18 18">
          <path d="M3 1l12 10-6 0 3 6-2 1-3-6-4 3z" fill="#eef1f6" stroke="#4a5570" />
        </svg>
      </ToolCell>
      <ToolCell>
        <svg width="24" height="24" viewBox="0 0 22 18">
          <path d="M1 17L21 1" stroke="#1c2ca0" strokeWidth="1.500" />
        </svg>
      </ToolCell>
      {COL1_COLORS.map((c, i) => (
        <ToolCell key={i}>
          <ColDot $c={c} />
        </ToolCell>
      ))}
    </ToolCol>
    <ToolCol2>
      <EditCell $active>
        <EditTop>Edit</EditTop>
        <span>1</span>
      </EditCell>
      <EditCell>
        <EditTop>Edit</EditTop>
        <span>2</span>
      </EditCell>
      {TOOL_DRAWINGS.map((d, i) => (
        <ToolCell key={i}>
          <svg width="26" height="26" viewBox="0 0 26 20" preserveAspectRatio="none">
            {d}
          </svg>
        </ToolCell>
      ))}
    </ToolCol2>
  </ToolsGrid>
);

const LineStyles: FC = () => (
  <StyleCol>
    <StyleRow $active $h={9} $mb={10}>
      <svg width="50" height="6" viewBox="0 0 50 6">
        <path d="M0 3H50" stroke="#000" strokeWidth="1.600" />
      </svg>
    </StyleRow>
    {["14 5 14 5", "4 3", "12 3 3 3", "6 2 2 2", "2 2"].map((dash, i) => (
      <StyleRow key={i} $h={10.200}>
        <svg width="50" height="6" viewBox="0 0 50 6">
          <path d="M0 3H50" stroke="#000" strokeWidth="1.600" strokeDasharray={dash} />
        </svg>
      </StyleRow>
    ))}
    <Pie>
      <svg width="36" height="32" viewBox="0 0 36 32">
        <path d="M14 16V1a16 15 0 0 1 16 15z" fill="#2b3b58" />
        <path d="M14 16H30A16 15 0 0 1 14 31z" fill="#7d8794" />
        <path d="M14 16V31A16 15 0 0 1 0 16z" fill="#a2a8b2" />
        <path d="M14 16H0V1H14z" fill="#000" stroke="#e8c060" />
      </svg>
    </Pie>
  </StyleCol>
);

const WidthList: FC = () => (
  <WidthCol>
    {LINE_WIDTHS.map(([label, h], i) => (
      <WidthRow key={i} $active={i === 2}>
        <WidthLine $h={h} />
        <WidthText>{label}</WidthText>
      </WidthRow>
    ))}
  </WidthCol>
);

const CadIcon: FC = () => (
  <svg width="72" height="52" viewBox="0 0 72 52">
    <path d="M2 24L16 13h22L24 24z" fill="#c8604c" stroke="#000" />
    <path d="M24 24L38 13v18l-14 10z" fill="#5a1020" stroke="#000" />
    <path d="M24 41l14-10h20l-14 11H34l-10 9H0l0-1z" fill="#c8503c" stroke="#000" />
    <path d="M2 24h22v26H2z" fill="#b84838" stroke="#000" />
    <path d="M2 24h22" stroke="#fff" />
    <path d="M20 24v26" stroke="#fff" />
    <text x="10" y="43" fontSize="10" fill="#fff" fontFamily="Liberation Sans">R</text>
    <text x="36" y="42" fontSize="10" fontStyle="italic" fill="#fff" fontFamily="Liberation Sans">F</text>
    <path d="M56 10l14 32" stroke="#3a4a70" strokeWidth="2.500" />
    <path d="M37 8h3M38.500 6.500v3M45 4h3M46.500 2.500v3M53 1h3M54.500 0v3M46 10h2M47 9v2M56 6h2M57 5v2" stroke="#333" strokeWidth=".7" />
  </svg>
);

const Dialog: FC = () => (
  <DialogFrame>
    <DialogTitle>
      Aufmaß einfügen: Länge (FN 00, FN 04, FN 91)
      <DialogClose>
        <svg width="12" height="12" viewBox="0 0 12 12">
          <path d="M1.500 1.500l9 9M10.500 1.500l-9 9" stroke="#fff" strokeWidth="1.800" />
        </svg>
      </DialogClose>
    </DialogTitle>
    <DialogClient>
      <DialogHead>
        <HeadIcon>
          <CadIcon />
        </HeadIcon>
        <HeadText>
          Kontrollieren und bearbeiten Sie die Intervalle der Konturlängen. Für
          <br />
          Kurvenabschnitte kann die Auflösung für die Zerlegung festgelegt werden.
          <br />
          Durch Angabe einer Höhe ist die Berechnung einer Wandfläche möglich.
          <br />
          Wählen Sie die Formelnummer (FN) für das gewünschte Exportformat.
        </HeadText>
      </DialogHead>
      <DialogBody>
        <ScaleLine>
          <span>Messgrößen im aktuellen Maßstab</span>
          <span>1:50</span>
        </ScaleLine>
        <ExportLine>
          <ExportLabel>Exportformat:</ExportLabel>
          <RadioItem $w={63}>
            <Radio />
            FN 00
          </RadioItem>
          <RadioItem $w={165}>
            <Radio />
            FN 91 (Standard)
          </RadioItem>
          <RadioItem $w={60}>
            <Radio $on />
            FN 04
          </RadioItem>
        </ExportLine>
        <GridBox>
          <GridTable>
            <thead>
              <tr>
                <MarkTh />
                <Th $w={41}>Nr.</Th>
                <Th $w={89.500}>Y(i) [m]</Th>
                <Th $w={89.500}>Z(i) [m]</Th>
                <Th $w={90.500}>Länge [m]</Th>
              </tr>
            </thead>
            <tbody>
              {TABLE_ROWS.map((r, i) => (
                <tr key={i}>
                  <MarkTd>{i === 0 && <svg width="7" height="11" viewBox="0 0 7 11"><path d="M1 1l5 4.500-5 4.500z" fill="none" stroke="#000" /></svg>}</MarkTd>
                  <Td>{r[0]}</Td>
                  <Td>{r[1]}</Td>
                  <Td>{r[2]}</Td>
                  <Td $white>{r[3]}</Td>
                </tr>
              ))}
            </tbody>
          </GridTable>
          <GridScroll>
            <Chev dir="up" />
            <GridThumb />
            <Chev dir="down" />
          </GridScroll>
        </GridBox>
        <LowerArea>
          <LowerLeft>
            <ResolutionLine>
              <span>Auflösung für Kurvenzerlegung:</span>
              <DisabledField>0,200</DisabledField>
              <span>m</span>
            </ResolutionLine>
            <CheckLine>
              <CheckBox>
                <svg width="11" height="11" viewBox="0 0 11 11">
                  <path d="M2 5.500l2.500 3L9 2" fill="none" stroke="#666" strokeWidth="1.800" />
                </svg>
              </CheckBox>
              Flächenberechnung
            </CheckLine>
            <HeightLine>
              <HeightLabel>Höhe H:</HeightLabel>
              <Combo>
                2,780
                <Chev dir="down" />
              </Combo>
              <HeightUnit>m</HeightUnit>
              <FormButton $w={86}>Messen</FormButton>
            </HeightLine>
          </LowerLeft>
          <LowerRight>
            <StatRow $mt={19}>
              <span>Teillängen:</span>
              <span>6</span>
            </StatRow>
            <StatRow $mt={0}>
              <span>Länge L:</span>
              <span>14,805m</span>
            </StatRow>
            <StatRow $mt={19}>
              <span>Fläche F:</span>
              <span>
                41,158m<sup>2</sup>
              </span>
            </StatRow>
          </LowerRight>
        </LowerArea>
      </DialogBody>
      <DialogFooter>
        <FormButton $w={86} $disabled>
          &lt; Zurück
        </FormButton>
        <FormButton $w={85} $default>
          Weiter &gt;
        </FormButton>
        <FormButton $w={85}>Fertig stellen</FormButton>
        <FormButton $w={85}>Abbrechen</FormButton>
        <FormButton $w={85}>Hilfe</FormButton>
      </DialogFooter>
    </DialogClient>
  </DialogFrame>
);

export default function App() {
  return (
    <Root>
      <GlobalStyle />
      <TitleBar>
        <AppIcon>
          <svg width="16" height="18" viewBox="0 0 16 18">
            <path d="M0 0h16v18H0z" fill="#d9823c" />
            <path d="M3 3h9v12H3z" fill="#f6e6cc" stroke="#6b2a12" />
            <path d="M6 6h4v6H6z" fill="none" stroke="#6b2a12" />
          </svg>
        </AppIcon>
        <TitleText>
          DIG-CAD - lizenziert für MWM Software Gmb<TitleLast>H</TitleLast>
        </TitleText>
        <Caption>
          <CapButton>
            <MinGlyph />
          </CapButton>
          <CapButton>
            <MaxGlyph />
          </CapButton>
          <CloseButton>
            <svg width="10" height="10" viewBox="0 0 10 10">
              <path d="M1 1l8 8M9 1l-8 8" stroke="#fff" strokeWidth="1.400" />
            </svg>
          </CloseButton>
        </Caption>
      </TitleBar>
      <Workspace>
        <MenuBar>
          {MENU.map(([pre, key, post], i) => (
            <MenuItem key={i}>
              {pre}
              <u>{key}</u>
              {post}
            </MenuItem>
          ))}
        </MenuBar>
        <ToolbarArea>
          {TOOLBAR_ROWS.map((row, i) => (
            <ToolbarRow key={i}>
              {row.map((bar, j) => (
                <Toolbar key={j} bar={bar} />
              ))}
            </ToolbarRow>
          ))}
        </ToolbarArea>
        <Middle>
          <LeftDock>
            <DockTop>
              <Tri color="#cfd6e2" />
            </DockTop>
            <DockStrip />
            <DockHeader>
              <span>Ebenen</span>
              <HeaderMarks>
                <Updown />
                <Tri up />
              </HeaderMarks>
            </DockHeader>
            <Tree />
            <Dropper label="Bauteile" />
            <Dropper label="Blöcke" />
            <Dropper label="Symbole" />
          </LeftDock>
          <DocArea>
            <TabRow>
              <DocTab>
                A-3 Obergeschoss neu.dcd*
                <TabClose>×</TabClose>
              </DocTab>
              <Tri color="#cfd6e2" />
            </TabRow>
            <YellowLine />
            <InfoBar>
              <InfoGrid>
                <InfoCell>
                  <span>Absolut X:</span>
                  <span>14,1m</span>
                </InfoCell>
                <InfoCell>
                  <span>Rel. Länge:</span>
                  <span>16,0m</span>
                </InfoCell>
                <InfoCell />
                <InfoCell />
                <InfoCell>
                  <span>Absolut Y:</span>
                  <span>7,5m</span>
                </InfoCell>
                <InfoCell>
                  <span>Rel. Winkel:</span>
                  <span>68,7g</span>
                </InfoCell>
                <InfoCell />
                <InfoCell />
              </InfoGrid>
              <More>»</More>
              <MiniGrid>
                <MiniCell><ToolIcon kind="hand" size={16} /></MiniCell>
                <MiniCell><ToolIcon kind="ruler" size={16} /></MiniCell>
                <MiniCell><ToolIcon kind="b2" size={16} /></MiniCell>
                <MiniCell />
                <MiniCell><ToolIcon kind="check" size={16} /></MiniCell>
                <MiniCell />
              </MiniGrid>
              <WrenchSlot>
                <svg width="10" height="20" viewBox="0 0 10 20">
                  <path d="M1 1v4l3 2v12h2V7l3-2V1L7 3H3z" fill="#f0f2f6" />
                </svg>
              </WrenchSlot>
              <InfoGridSmall>
                <InfoCell />
                <InfoCell />
                <InfoCell />
                <InfoCell />
              </InfoGridSmall>
              <More>»</More>
              <InfoTools>
                {["curve", "square", "*note", "rect", "mark1", "plan", "eraser", "del", "undo", "ok", "wallTool", "stop"].map((k, i) =>
                  k.startsWith("*") ? (
                    <Highlit key={i}>
                      <ToolIcon kind={k.slice(1)} />
                    </Highlit>
                  ) : (
                    <BarButton key={i}>
                      <ToolIcon kind={k} />
                    </BarButton>
                  ),
                )}
              </InfoTools>
            </InfoBar>
            <CanvasRow>
              <VScroll>
                <Chev dir="up" />
                <VThumb />
                <Chev dir="down" />
              </VScroll>
              <CadDrawing />
              <VScroll>
                <Chev dir="up" />
                <Chev dir="down" />
              </VScroll>
            </CanvasRow>
            <HScrollRow>
              <ZoomField>
                1,54<small>×</small>
              </ZoomField>
              <Chev dir="left" />
              <HTrack>
                <HThumb />
              </HTrack>
              <Chev dir="right" />
              <ScrollCorner />
            </HScrollRow>
            <YellowLine />
          </DocArea>
          <RightDock>
            <DockTop>
              <Tri color="#cfd6e2" />
            </DockTop>
            <RightStrip />
            <PointPanel>
              <PointHead>Punkte</PointHead>
              <PointRow>
                <PointRowIcon d="M3 16h20M23 4v12M3 4h6" dots="M3 16h.1M13 16h.1M23 16h.1" />
                <PointRowIcon d="M5 4h6M15 10h6M5 16h6" dots="M8 4h.1M18 10h.1" />
                <PointSep />
                <PointRowIcon d="M15 2a8 8 0 1 0 .1 0" dots="M15 10h.1" />
                <PointRowIcon d="M15 2a8 8 0 1 0 .1 0" dots="M15 2h.1M23 10h.1M15 18h.1M7 10h.1" />
              </PointRow>
              <PointRow>
                <PointRowIcon d="M4 2l20 16M24 2L4 18" dots="M14 10h.1" />
                <PointRowIcon d="M4 3l20 14" dots="M4 3h.1M14 10h.1M24 17h.1" />
                <PointRowIcon d="M4 3l10 7M14 16l12-8" dots="M15 12h.1M22 10h.1" />
              </PointRow>
              <PointRow>
                <PointRowIcon d="M4 3l20 14" dots="M14 10h.1" />
                <PointRowIcon d="M4 3l20 14M10 2l14 11" dots="M14 8h.1" />
                <PointRowIcon d="M4 3l10 10M14 13l12-8M14 13v5" dots="M14 13h.1M20 4h.1" />
                <PointRowIcon d="M3 16l10-6 12-8M3 10l8 8" dots="M6 14h.1M22 5h.1" />
              </PointRow>
            </PointPanel>
            <DockColumn>
              <PanelHead>
                Werkzeuge
                <Tri up />
              </PanelHead>
              <ToolsColumn />
              <PanelHead>
                Attribute
                <Tri up />
              </PanelHead>
              <AttrBody>
                <AttrTop>
                  <LineStyles />
                  <WidthList />
                </AttrTop>
                <ColorGrid>
                  {SWATCHES.map((c, i) => (
                    <Swatch key={i} $c={c} $active={i === 17 || i === 8} />
                  ))}
                </ColorGrid>
              </AttrBody>
              <DockFill />
            </DockColumn>
          </RightDock>
        </Middle>
        <StatusBar>
          <StatusMsg>Aufmaß über Länge: Aufmaßdaten kontrollieren und Berechnungsart wählen (Umschalt: Abzug)</StatusMsg>
          <StatusMore>»</StatusMore>
          <StatusLayer>
            <PageIcon />
            <span>Gipswand d=100 mm</span>
          </StatusLayer>
          <StatusScale>M 1:50</StatusScale>
          <StatusGroup>
            <svg width="13" height="16" viewBox="0 0 13 16">
              <path d="M1 1h7l4 2v12H1z" fill="#f0cf70" stroke="#a07c28" />
              <path d="M7 11h4v3H7z" fill="#7a5c14" />
            </svg>
            <span>freie Elemente</span>
          </StatusGroup>
          <StatusPen>
            <PenLine />
            <span>0,50mm</span>
            <PenColor />
            <span>100%</span>
          </StatusPen>
          <StatusGrip>
            <svg width="20" height="6" viewBox="0 0 20 6">
              <path d="M11 .5h9M6 3h14M0 5.500h20" stroke="#6f7f9c" />
            </svg>
          </StatusGrip>
        </StatusBar>
      </Workspace>
      <Dialog />
      <LogoBall>
        <svg width="52" height="54" viewBox="0 0 52 54">
          <defs>
            <radialGradient id="ball" cx=".4" cy=".3" r=".75">
              <stop offset="0" stopColor="#cbd3f0" />
              <stop offset="1" stopColor="#7283cc" />
            </radialGradient>
          </defs>
          <ellipse cx="26" cy="27" rx="25.500" ry="26.500" fill="url(#ball)" stroke="#56658a" />
          <path d="M6 18L26 10l20 8v2H6z" fill="none" stroke="#2f3f66" strokeWidth="2" />
          <path d="M9 21h5v17H9zM19 21h4v17h-4zM29 21h4v17h-4zM38 21h5v17h-5zM7 38h38v3H7z" fill="#2f3f66" />
        </svg>
      </LogoBall>
    </Root>
  );
}

/* ---------- styles: shell ---------- */

const Root = styled.div`
  position: relative;
  width: 1859px;
  height: 1079px;
  overflow: hidden;
  background: #e9e9e9;
  font-family: ${UI_FONT};
  font-size: 11.5px;
  color: #111;
`;

const TitleBar = styled.header`
  height: 31px;
  display: flex;
  align-items: flex-start;
  padding-left: 10px;
`;

const AppIcon = styled.div`
  padding-top: 6px;
  line-height: 0;
`;

const TitleText = styled.div`
  flex: 1;
  text-align: center;
  font-size: 14.5px;
  line-height: 31px;
  color: #333;
  padding-left: 76px;
`;

const TitleLast = styled.span`
  color: #2b5c9c;
`;

const Caption = styled.div`
  display: flex;
  width: 95px;
  height: 21px;
  margin-right: 6px;
  align-items: stretch;
  justify-content: flex-end;
`;

const CapButton = styled.div`
  width: 26px;
  display: flex;
  align-items: center;
  justify-content: center;
`;

const MinGlyph = styled.div`
  width: 8px;
  height: 3px;
  background: #222;
  margin-top: 6px;
`;

const MaxGlyph = styled.div`
  width: 10px;
  height: 11px;
  border: 1px solid #222;
  border-top-width: 2px;
  margin-top: -3px;
`;

const CloseButton = styled.div`
  width: 45px;
  background: #bdbdbd;
  display: flex;
  align-items: center;
  justify-content: center;
`;

const Workspace = styled.div`
  width: 1844px;
  margin-left: 7px;
  display: flex;
  flex-direction: column;
`;

const MenuBar = styled.nav`
  height: 24px;
  display: flex;
  align-items: center;
  padding-left: 9px;
  background: linear-gradient(#cbd3e2, #bec7d9);
  border-bottom: 1px solid #a8b3c8;
`;

const MenuItem = styled.div`
  margin-right: 16px;
  font-size: 11.5px;
  color: #151b28;
`;

const ToolbarArea = styled.div`
  height: 100px;
  padding: 1px 0 0 4px;
  background: ${TOOLBAR_BG};
  display: flex;
  flex-direction: column;
  gap: 1px;
`;

const ToolbarRow = styled.div`
  height: 32px;
  display: flex;
`;

const Bar = styled.div<{ $w: number; $ml: number }>`
  width: ${({ $w }) => $w}px;
  margin-left: ${({ $ml }) => $ml}px;
  flex: none;
  display: flex;
  align-items: stretch;
  border-radius: 3px;
  background: linear-gradient(#bfc8d9, #a9b4c9);
`;

const Grip = styled.div`
  width: 8px;
  margin: 5px 0 4px 3px;
  border-left: 2px dotted #3b4a68;
`;

const BarItems = styled.div`
  flex: 1;
  display: flex;
  align-items: center;
  overflow: hidden;
`;

const BarButton = styled.div`
  width: 31px;
  flex: none;
  display: flex;
  align-items: center;
  justify-content: center;
  opacity: 0.4;
`;

const Highlit = styled.div`
  width: 31px;
  height: 30px;
  flex: none;
  display: flex;
  align-items: center;
  justify-content: center;
  background: #ffedb5;
  border: 1px solid #e6bd5c;
`;

const BarSep = styled.div`
  width: 1px;
  height: 26px;
  margin: 0 2px;
  background: #8592ab;
  border-right: 1px solid #d0d7e4;
  flex: none;
`;

const BarCap = styled.div`
  width: 10px;
  flex: none;
  background: linear-gradient(#dde3ee, #c4cddd);
  border-radius: 0 3px 3px 0;
  display: flex;
  align-items: flex-end;
  justify-content: center;
  padding-bottom: 5px;
`;

const CapArrow = styled.div`
  width: 0;
  height: 0;
  border-left: 3px solid transparent;
  border-right: 3px solid transparent;
  border-top: 4px solid #27375f;
`;

const Middle = styled.main`
  height: 894px;
  display: flex;
  background: ${DARK};
`;

/* ---------- left dock ---------- */

const LeftDock = styled.aside`
  width: 343px;
  flex: none;
  padding: 0 7px 0 4px;
  display: flex;
  flex-direction: column;
`;

const DockTop = styled.div`
  height: 23px;
  flex: none;
  display: flex;
  justify-content: flex-end;
  align-items: center;
  padding: 5px 7px 0 0;
`;

const DockStrip = styled.div`
  height: 10px;
  flex: none;
  background: radial-gradient(#50658e 1px, transparent 1px) 0 0 / 3px 3px, #3c5078;
  border-radius: 3px 3px 0 0;
`;

const DockHeader = styled.div`
  height: 17px;
  margin-bottom: 1px;
  flex: none;
  display: flex;
  align-items: center;
  justify-content: space-between;
  padding: 0 6px 0 7px;
  font-size: 10px;
  color: #222;
  background: linear-gradient(#e6eaf1, #cdd3df 55%, #c5ccd9);
  border-bottom: 1px solid #596a88;
`;

const HeaderMarks = styled.div`
  display: flex;
  align-items: center;
  gap: 8px;
`;

const TreeBox = styled.div`
  height: 790px;
  flex: none;
  background: #fff;
  padding: 0 0 0 4px;
  overflow: hidden;
  margin-bottom: 1px;
`;

const TreeRow = styled.div`
  height: 18px;
  display: flex;
  align-items: stretch;
  white-space: nowrap;
`;

const Guide = styled.div<{ $on: boolean }>`
  width: 20px;
  flex: none;
  position: relative;
  &::before {
    content: "";
    display: ${({ $on }) => ($on ? "block" : "none")};
    position: absolute;
    left: 9px;
    top: 0;
    bottom: 0;
    border-left: 1px dotted #555;
  }
`;

const Expander = styled.div`
  width: 20px;
  flex: none;
  position: relative;
  display: flex;
  align-items: center;
  justify-content: center;
  &::after {
    content: "";
    position: absolute;
    left: 14px;
    right: 0;
    top: 9px;
    border-top: 1px dotted #555;
  }
`;

const ExpBox = styled.div`
  width: 10px;
  height: 10px;
  margin-right: 1px;
  border: 1px solid #7d8aa3;
  background: linear-gradient(#fff, #dfe4ee);
  font-size: 10px;
  line-height: 8px;
  text-align: center;
  color: #223;
  font-family: "Liberation Sans", sans-serif;
  position: relative;
  z-index: 1;
`;

const Elbow = styled.div<{ $last: boolean }>`
  width: 20px;
  flex: none;
  position: relative;
  &::before {
    content: "";
    position: absolute;
    left: 9px;
    top: 0;
    height: ${({ $last }) => ($last ? "9px" : "18px")};
    border-left: 1px dotted #555;
  }
  &::after {
    content: "";
    position: absolute;
    left: 10px;
    right: 2px;
    top: 9px;
    border-top: 1px dotted #555;
  }
`;

const TreeIconSlot = styled.div`
  width: 19px;
  flex: none;
  display: flex;
  align-items: center;
`;

const TreeLabel = styled.div<{ $bold?: boolean }>`
  margin-left: 6px;
  line-height: 18px;
  font-size: 11.5px;
  font-weight: ${({ $bold }) => ($bold ? 700 : 400)};
  color: #171717;
`;

const PageIconBox = styled.div`
  display: inline-flex;
  align-items: center;
  line-height: 0;
`;

const PageLetters = styled.div`
  display: flex;
  flex-direction: column;
  gap: 3px;
  font-size: 7px;
  line-height: 6px;
  color: #222;
  font-family: "Liberation Sans", sans-serif;
  margin-left: 1px;
`;

/* ---------- document ---------- */

const DocArea = styled.section`
  width: 1362px;
  flex: none;
  display: flex;
  flex-direction: column;
`;

const TabRow = styled.div`
  height: 23px;
  flex: none;
  padding: 3px 7px 0 0;
  display: flex;
  align-items: center;
  justify-content: space-between;
`;

const DocTab = styled.div`
  width: 175px;
  height: 20px;
  background: ${YELLOW};
  border-radius: 2px 2px 0 0;
  display: flex;
  align-items: center;
  justify-content: space-between;
  padding: 0 5px;
  font-size: 11.3px;
  color: #222;
  white-space: nowrap;
`;

const TabClose = styled.span`
  font-family: "Liberation Sans", sans-serif;
  font-size: 15px;
  line-height: 14px;
`;

const YellowLine = styled.div`
  height: 4px;
  flex: none;
  background: ${YELLOW};
`;

const InfoBar = styled.div`
  height: 46px;
  flex: none;
  display: flex;
  align-items: center;
  padding-left: 1px;
  background: ${TOOLBAR_BG};
`;

const InfoGrid = styled.div`
  display: grid;
  grid-template-columns: 138px 138px 137px 137px;
  grid-auto-rows: 20px;
  gap: 2px;
`;

const InfoGridSmall = styled.div`
  display: grid;
  grid-template-columns: 151px 152px;
  grid-auto-rows: 20px;
  gap: 2px;
`;

const InfoCell = styled.div`
  display: flex;
  align-items: center;
  justify-content: space-between;
  padding: 0 2px 0 4px;
  font-size: 11px;
  color: #1b1f2a;
  background: linear-gradient(#c9d1e0, #b3bdd0);
`;

const More = styled.div`
  width: 12px;
  flex: none;
  align-self: flex-start;
  margin-top: 1px;
  color: #eef1f6;
  font-size: 12px;
  line-height: 14px;
  text-align: center;
`;

const MiniGrid = styled.div`
  display: grid;
  grid-template-columns: repeat(3, 24px);
  grid-auto-rows: 20px;
  gap: 2px;
  margin-left: 1px;
  border-left: 1px solid #d0d7e4;
  padding-left: 1px;
`;

const MiniCell = styled.div`
  display: flex;
  align-items: center;
  justify-content: center;
  background: linear-gradient(#c9d1e0, #b3bdd0);
  & svg {
    opacity: 0.45;
  }
`;

const WrenchSlot = styled.div`
  width: 10px;
  flex: none;
  display: flex;
  justify-content: center;
  margin-left: 1px;
  border-left: 1px solid #d0d7e4;
`;

const InfoTools = styled.div`
  flex: 1;
  height: 100%;
  display: flex;
  align-items: center;
  padding-left: 3px;
  border-left: 1px solid #d0d7e4;
`;

const CanvasRow = styled.div`
  height: 800px;
  flex: none;
  display: flex;
`;

const CanvasSvg = styled.svg`
  width: 1330px;
  height: 800px;
  flex: none;
  display: block;
  background: #fff;
`;

const VScroll = styled.div`
  width: 16px;
  flex: none;
  background: #f0f0f0;
  display: flex;
  flex-direction: column;
  align-items: center;
  justify-content: space-between;
  padding: 5px 0;
`;

const VThumb = styled.div`
  width: 100%;
  height: 16px;
  background: #c8c8c8;
  margin-top: -60px;
`;

const HScrollRow = styled.div`
  height: 17px;
  flex: none;
  background: #f0f0f0;
  display: flex;
  align-items: center;
`;

const ZoomField = styled.div`
  width: 50px;
  height: 16px;
  background: #fff;
  padding-left: 5px;
  font-size: 11px;
  line-height: 16px;
  color: #111;
  margin-right: 4px;
  & small {
    font-size: 9px;
    color: #555;
  }
`;

const HTrack = styled.div`
  flex: 1;
  height: 100%;
  padding-left: 690px;
`;

const HThumb = styled.div`
  width: 184px;
  height: 100%;
  background: #c8c8c8;
`;

const ScrollCorner = styled.div`
  width: 16px;
  height: 100%;
  background: #fff;
  margin-left: 8px;
`;

/* ---------- right dock ---------- */

const RightDock = styled.aside`
  width: 139px;
  flex: none;
  display: flex;
  flex-direction: column;
  padding-left: 5px;
  background: ${DARK};
`;

const RightStrip = styled.div`
  height: 6px;
  flex: none;
  background: radial-gradient(#50658e 1px, transparent 1px) 0 0 / 3px 3px, #3c5078;
  border-radius: 3px 3px 0 0;
`;

const PointPanel = styled.div`
  height: 114px;
  flex: none;
  background: #bac4d6;
`;

const PointHead = styled.div`
  height: 16px;
  padding-left: 5px;
  font-size: 10px;
  line-height: 15px;
  color: #222;
  background: linear-gradient(#eef1f6, #d8dde7);
  border-bottom: 1px solid #7a88a3;
`;

const PointRow = styled.div`
  height: 32.700px;
  display: flex;
  align-items: center;
  gap: 4px;
  padding-left: 7px;
  border-bottom: 1px solid #9aa7bd;
`;

const PointSep = styled.div`
  width: 1px;
  height: 26px;
  background: #7a88a3;
`;

const DockColumn = styled.div`
  width: 131px;
  flex: 1;
  min-height: 0;
  display: flex;
  flex-direction: column;
  background: ${DOTS};
`;

const PanelHead = styled.div`
  width: 127px;
  height: 18px;
  flex: none;
  display: flex;
  align-items: center;
  justify-content: space-between;
  padding: 0 6px 0 5px;
  font-size: 10px;
  color: #222;
  background: linear-gradient(#eef1f6, #d8dde7);
  border-bottom: 1px solid #7a88a3;
`;

const ToolsGrid = styled.div`
  width: 127px;
  height: 360px;
  flex: none;
  display: flex;
  background: #bac4d6;
  padding: 1px 0 0 5px;
  overflow: hidden;
`;

const ToolCol = styled.div`
  width: 27px;
  flex: none;
`;

const ToolCol2 = styled.div`
  width: 32px;
  flex: none;
  border-right: 1px solid #a3aec3;
`;

const ToolCell = styled.div`
  height: 30px;
  display: flex;
  align-items: center;
  justify-content: center;
  overflow: hidden;
`;

const ColDot = styled.div<{ $c: string }>`
  width: 22px;
  height: 16px;
  border-radius: 6px;
  background: ${({ $c }) => $c};
`;

const EditCell = styled.div<{ $active?: boolean }>`
  height: 29px;
  margin-bottom: 1px;
  display: flex;
  flex-direction: column;
  align-items: center;
  padding-top: 1px;
  font-family: "Liberation Sans", sans-serif;
  font-weight: 700;
  font-size: 11.5px;
  line-height: 12px;
  color: #33426b;
  background: ${({ $active }) => ($active ? "#ffedb5" : "transparent")};
  border: 1px solid ${({ $active }) => ($active ? "#e6bd5c" : "transparent")};
`;

const EditTop = styled.span`
  border-bottom: 1px solid #33426b;
`;

const AttrBody = styled.div`
  width: 127px;
  height: 195px;
  flex: none;
  background: #bac4d6;
`;

const AttrTop = styled.div`
  height: 104px;
  display: flex;
  border-bottom: 1px solid #9aa7bd;
`;

const StyleCol = styled.div`
  width: 64px;
  flex: none;
  padding-top: 2px;
  border-right: 1px solid #a3aec3;
`;

const StyleRow = styled.div<{ $active?: boolean; $h: number; $mb?: number }>`
  height: ${({ $h }) => $h}px;
  margin-bottom: ${({ $mb }) => $mb ?? 0}px;
  display: flex;
  align-items: center;
  justify-content: flex-end;
  padding-right: 1px;
  background: ${({ $active }) => ($active ? "#ffedb5" : "transparent")};
`;

const Pie = styled.div`
  padding-left: 18px;
  line-height: 0;
  margin-top: 1px;
`;

const WidthCol = styled.div`
  flex: 1;
  padding: 1px 0 0 2px;
`;

const WidthRow = styled.div<{ $active?: boolean }>`
  height: 17px;
  display: flex;
  align-items: center;
  padding-left: 3px;
  background: ${({ $active }) => ($active ? "#ffedb5" : "transparent")};
  box-shadow: ${({ $active }) => ($active ? "inset 0 0 0 1px #e6bd5c" : "none")};
`;

const WidthLine = styled.div<{ $h: number }>`
  width: 27px;
  height: ${({ $h }) => $h}px;
  background: #000;
`;

const WidthText = styled.span`
  margin-left: 6px;
  font-size: 11.5px;
  color: #26345c;
`;

const ColorGrid = styled.div`
  display: grid;
  grid-template-columns: repeat(4, 25px);
  grid-auto-rows: 10px;
  gap: 5.200px 6px;
  padding: 3px 0 0 5px;
`;

const Swatch = styled.div<{ $c: string; $active?: boolean }>`
  background: ${({ $c }) => $c};
  box-shadow: ${({ $active }) => ($active ? "0 0 0 2px #ffedb5, 0 0 0 3px #e6bd5c" : "none")};
`;

const DockFill = styled.div`
  flex: 1;
  border-bottom: 4px solid #55688c;
`;

/* ---------- status bar ---------- */

const StatusBar = styled.footer`
  height: 22px;
  display: flex;
  align-items: center;
  background: ${DARK};
  color: #eef1f6;
  font-size: 11.4px;
  white-space: nowrap;
`;

const StatusMsg = styled.div`
  width: 780px;
  padding-left: 31px;
`;

const StatusMore = styled.div`
  width: 22px;
  text-align: right;
  padding-right: 4px;
  align-self: flex-start;
  line-height: 14px;
`;

const StatusLayer = styled.div`
  width: 382px;
  height: 100%;
  display: flex;
  align-items: center;
  gap: 6px;
  padding-left: 5px;
  border-left: 1px solid #eef1f6;
  & svg path {
    fill: #eef1f6;
  }
  & div {
    color: #eef1f6;
  }
`;

const StatusScale = styled.div`
  width: 40px;
`;

const StatusGroup = styled.div`
  width: 377px;
  height: 100%;
  display: flex;
  align-items: center;
  gap: 15px;
  padding-left: 8px;
  border-left: 1px solid #eef1f6;
  border-right: 1px solid #eef1f6;
`;

const StatusPen = styled.div`
  flex: 1;
  display: flex;
  align-items: center;
  padding-left: 5px;
  gap: 5px;
`;

const StatusGrip = styled.div`
  align-self: flex-end;
  line-height: 0;
  padding-bottom: 1px;
`;

const PenLine = styled.div`
  width: 30px;
  height: 2px;
  background: #fff;
`;

const PenColor = styled.div`
  width: 14px;
  height: 14px;
  background: ${BLUE};
`;

const LogoBall = styled.div`
  position: absolute;
  left: 1758px;
  top: 1013px;
  line-height: 0;
`;

/* ---------- dialog ---------- */

const DialogFrame = styled.div`
  position: absolute;
  left: 1126px;
  top: 370px;
  width: 614px;
  height: 597px;
  background: #67e8ec;
  border: 1px solid #4fbec4;
  display: flex;
  flex-direction: column;
  padding: 0 6px 7px;
`;

const DialogTitle = styled.div`
  height: 30px;
  flex: none;
  text-align: center;
  line-height: 29px;
  font-size: 14.2px;
  color: #1d3a46;
`;

const DialogClose = styled.div`
  position: absolute;
  top: 0;
  right: 5px;
  width: 31px;
  height: 21px;
  background: #c75050;
  display: flex;
  align-items: center;
  justify-content: center;
`;

const DialogClient = styled.div`
  flex: 1;
  display: flex;
  flex-direction: column;
  background: #f0f0f0;
  border: 1px solid #7fc0c4;
  border-bottom: none;
`;

const DialogHead = styled.div`
  height: 109px;
  flex: none;
  display: flex;
  background: #fff;
  border-bottom: 1px solid #8d9296;
`;

const HeadIcon = styled.div`
  width: 102px;
  flex: none;
  padding: 17px 0 0 16px;
`;

const HeadText = styled.div`
  padding-top: 16px;
  font-size: 13px;
  line-height: 19px;
  color: #1c1c80;
  white-space: nowrap;
`;

const DialogBody = styled.div`
  flex: 1;
  padding: 0 16px;
  display: flex;
  flex-direction: column;
  font-size: 11.3px;
`;

const ScaleLine = styled.div`
  height: 19px;
  margin-top: 15px;
  display: flex;
  align-items: center;
  gap: 10px;
`;

const ExportLine = styled.div`
  height: 19px;
  margin-top: 11px;
  display: flex;
  align-items: center;
`;

const ExportLabel = styled.div`
  width: 89px;
`;

const RadioItem = styled.label<{ $w: number }>`
  width: ${({ $w }) => $w}px;
  display: flex;
  align-items: center;
  gap: 4px;
`;

const Radio = styled.span<{ $on?: boolean }>`
  width: 13px;
  height: 13px;
  border-radius: 50%;
  border: 1px solid #707070;
  background: ${({ $on }) => ($on ? "radial-gradient(#222 3px, #fff 3.500px)" : "#fff")};
`;

const GridBox = styled.div`
  width: 459px;
  height: 226px;
  margin: 6px 0 0 107px;
  flex: none;
  display: flex;
  justify-content: space-between;
  overflow: hidden;
  border: 1px solid #777;
`;

const GridTable = styled.table`
  border-collapse: collapse;
  table-layout: fixed;
  width: 329px;
  height: 18px;
`;

const MarkTh = styled.th`
  width: 18px;
  height: 18px;
  padding: 0;
  border-right: 1.500px solid #000;
  border-bottom: 1.500px solid #000;
`;

const Th = styled.th<{ $w: number }>`
  width: ${({ $w }) => $w}px;
  height: 18px;
  padding: 0 0 0 3px;
  text-align: left;
  font-weight: 400;
  border-right: 1px solid #000;
  border-bottom: 1.500px solid #000;
`;

const MarkTd = styled.td`
  height: 19px;
  padding: 0 0 0 7px;
  border-right: 1.500px solid #000;
  border-bottom: 1px solid #9a9a9a;
  line-height: 0;
`;

const Td = styled.td<{ $white?: boolean }>`
  height: 19px;
  padding: 0 0 0 3px;
  background: ${({ $white }) => ($white ? "#fff" : "#f0f0f0")};
  border-right: 1px solid #9a9a9a;
  border-bottom: 1px solid #9a9a9a;
`;

const GridScroll = styled.div`
  width: 16px;
  margin-right: 1px;
  display: flex;
  flex-direction: column;
  align-items: center;
  justify-content: space-between;
  padding: 4px 0;
`;

const GridThumb = styled.div`
  width: 100%;
  height: 158px;
  background: #c8c8c8;
  margin-top: -1px;
  margin-bottom: 32px;
`;

const LowerArea = styled.div`
  flex: 1;
  display: flex;
`;

const LowerLeft = styled.div`
  width: 395px;
  flex: none;
`;

const LowerRight = styled.div`
  flex: 1;
`;

const ResolutionLine = styled.div`
  height: 22px;
  margin: 7px 0 0 107px;
  display: flex;
  align-items: center;
  & > span:first-child {
    width: 185px;
  }
  & > span:last-child {
    margin-left: 5px;
  }
`;

const DisabledField = styled.div`
  width: 70px;
  height: 21px;
  padding-left: 6px;
  line-height: 21px;
  color: #909090;
  border: 1px solid #d9d9d9;
`;

const CheckLine = styled.div`
  height: 16px;
  margin-top: 35px;
  display: flex;
  align-items: center;
  gap: 3px;
  color: #6d6d6d;
`;

const CheckBox = styled.div`
  width: 13px;
  height: 13px;
  border: 1px solid #aaa;
  background: #e6e6e6;
  line-height: 0;
`;

const HeightLine = styled.div`
  height: 24px;
  margin: -1px 0 0 107px;
  display: flex;
  align-items: center;
`;

const HeightLabel = styled.div`
  width: 77px;
`;

const Combo = styled.div`
  width: 70px;
  height: 23px;
  padding: 0 2px 0 6px;
  display: flex;
  align-items: center;
  justify-content: space-between;
  background: #fff;
  border: 1px solid #7a7a7a;
`;

const HeightUnit = styled.div`
  width: 23px;
  padding-left: 4px;
`;

const FormButton = styled.div<{ $w: number; $disabled?: boolean; $default?: boolean }>`
  width: ${({ $w }) => $w}px;
  height: 24px;
  flex: none;
  display: flex;
  align-items: center;
  justify-content: center;
  font-size: 11.3px;
  color: ${({ $disabled }) => ($disabled ? "#9a9a9a" : "#111")};
  background: ${({ $disabled }) => ($disabled ? "#efefef" : "linear-gradient(#f0f0f0, #e4e4e4)")};
  border: 1px solid
    ${({ $disabled, $default }) => ($disabled ? "#d9d9d9" : $default ? "#3c7fb1" : "#adadad")};
`;

const StatRow = styled.div<{ $mt: number }>`
  display: grid;
  grid-template-columns: 76px 1fr;
  height: 22px;
  align-items: center;
  margin-top: ${({ $mt }) => $mt}px;
  & sup {
    font-size: 7px;
    line-height: 0;
  }
`;

const DialogFooter = styled.div`
  height: 35px;
  flex: none;
  display: flex;
  align-items: center;
  gap: 8px;
  padding: 0 6px 0 129px;
  border-top: 1px solid #a0a0a0;
  & > div:nth-child(n + 3) {
    margin-left: 1.500px;
  }
`;
